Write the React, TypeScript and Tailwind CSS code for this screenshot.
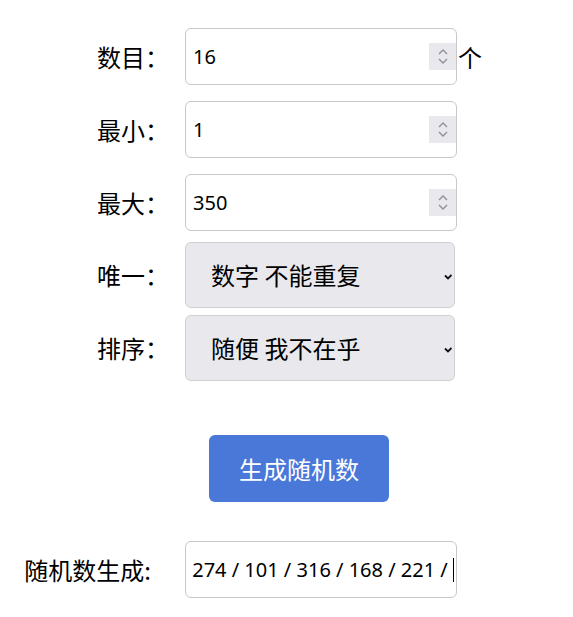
import React from "react";

const cjk = { fontFamily: '"Noto Sans CJK SC", "Noto Sans", sans-serif' };
const latin = { fontFamily: '"Noto Sans", "Noto Sans CJK SC", sans-serif' };

function Spinner() {
  return (
    <div className="ml-auto w-[27px] h-[27px] bg-[#e9e9ed] flex flex-col items-center justify-center gap-[3px]">
      <svg width="10" height="6" viewBox="0 0 10 6">
        <path d="M1 5 L5 1 L9 5" fill="none" stroke="#8f8f9d" strokeWidth="1.4" />
      </svg>
      <svg width="10" height="6" viewBox="0 0 10 6">
        <path d="M1 1 L5 5 L9 1" fill="none" stroke="#8f8f9d" strokeWidth="1.4" />
      </svg>
    </div>
  );
}

function Label({ children }: { children: React.ReactNode }) {
  return (
    <div className="w-[185px] pr-[16px] text-right text-[24px] text-black shrink-0" style={cjk}>
      {children}
    </div>
  );
}

function NumberRow({ label, value, className }: { label: string; value: string; className: string }) {
  return (
    <div className={"flex items-center " + className}>
      <Label>{label}</Label>
      <div className="w-[272px] h-[57px] border border-[#c8c8c8] rounded-[6px] flex items-center pl-[7px] pr-0 bg-white">
        <span className="text-[20px] text-black" style={latin}>{value}</span>
        <Spinner />
      </div>
    </div>
  );
}

function SelectRow({ label, value, className }: { label: string; value: string; className: string }) {
  return (
    <div className={"flex items-center " + className}>
      <Label>{label}</Label>
      <div className="w-[270px] h-[66px] border border-[#cfcfd4] rounded-[6px] bg-[#e9e9ed] flex items-center pl-[25px] pr-[2px]">
        <span className="text-[24px] text-black" style={cjk}>{value}</span>
        <svg className="ml-auto mt-[3px]" width="8" height="6" viewBox="0 0 8 6">
          <path d="M1 1.5 L4 4.5 L7.5 1" fill="none" stroke="#111" strokeWidth="1.8" />
        </svg>
      </div>
    </div>
  );
}

export default function App() {
  return (
    <div className="w-[573px] h-[617px] bg-white flex flex-col overflow-hidden" style={cjk}>
      <div className="flex items-center mt-[28px]">
        <Label>数目：</Label>
        <div className="w-[272px] h-[57px] border border-[#c8c8c8] rounded-[6px] flex items-center pl-[7px] pr-0 bg-white">
          <span className="text-[20px] text-black" style={latin}>16</span>
          <Spinner />
        </div>
        <span className="ml-[1px] text-[24px] text-black" style={cjk}>个</span>
      </div>
      <NumberRow label="最小：" value="1" className="mt-[16px]" />
      <NumberRow label="最大：" value="350" className="mt-[16px]" />
      <SelectRow label="唯一：" value="数字 不能重复" className="mt-[11px]" />
      <SelectRow label="排序：" value="随便 我不在乎" className="mt-[7px]" />
      <div className="mt-[54px] ml-[209px]">
        <div className="w-[180px] h-[67px] rounded-[6px] bg-[#4a78d9] flex items-center justify-center text-white text-[24px]" style={cjk}>
          生成随机数
        </div>
      </div>
      <div className="flex items-center mt-[39px]">
        <div className="w-[185px] pr-[34px] text-right text-[24px] text-black shrink-0" style={cjk}>
          随机数生成:
        </div>
        <div className="w-[272px] h-[57px] border border-[#c8c8c8] rounded-[6px] flex items-center justify-end pr-[2px] bg-white overflow-hidden">
          <span className="text-[20px] text-black whitespace-pre" style={latin}>274 / 101 / 316 / 168 / 221 / </span>
          <span className="w-[1px] h-[24px] bg-black" />
        </div>
      </div>
    </div>
  );
}
